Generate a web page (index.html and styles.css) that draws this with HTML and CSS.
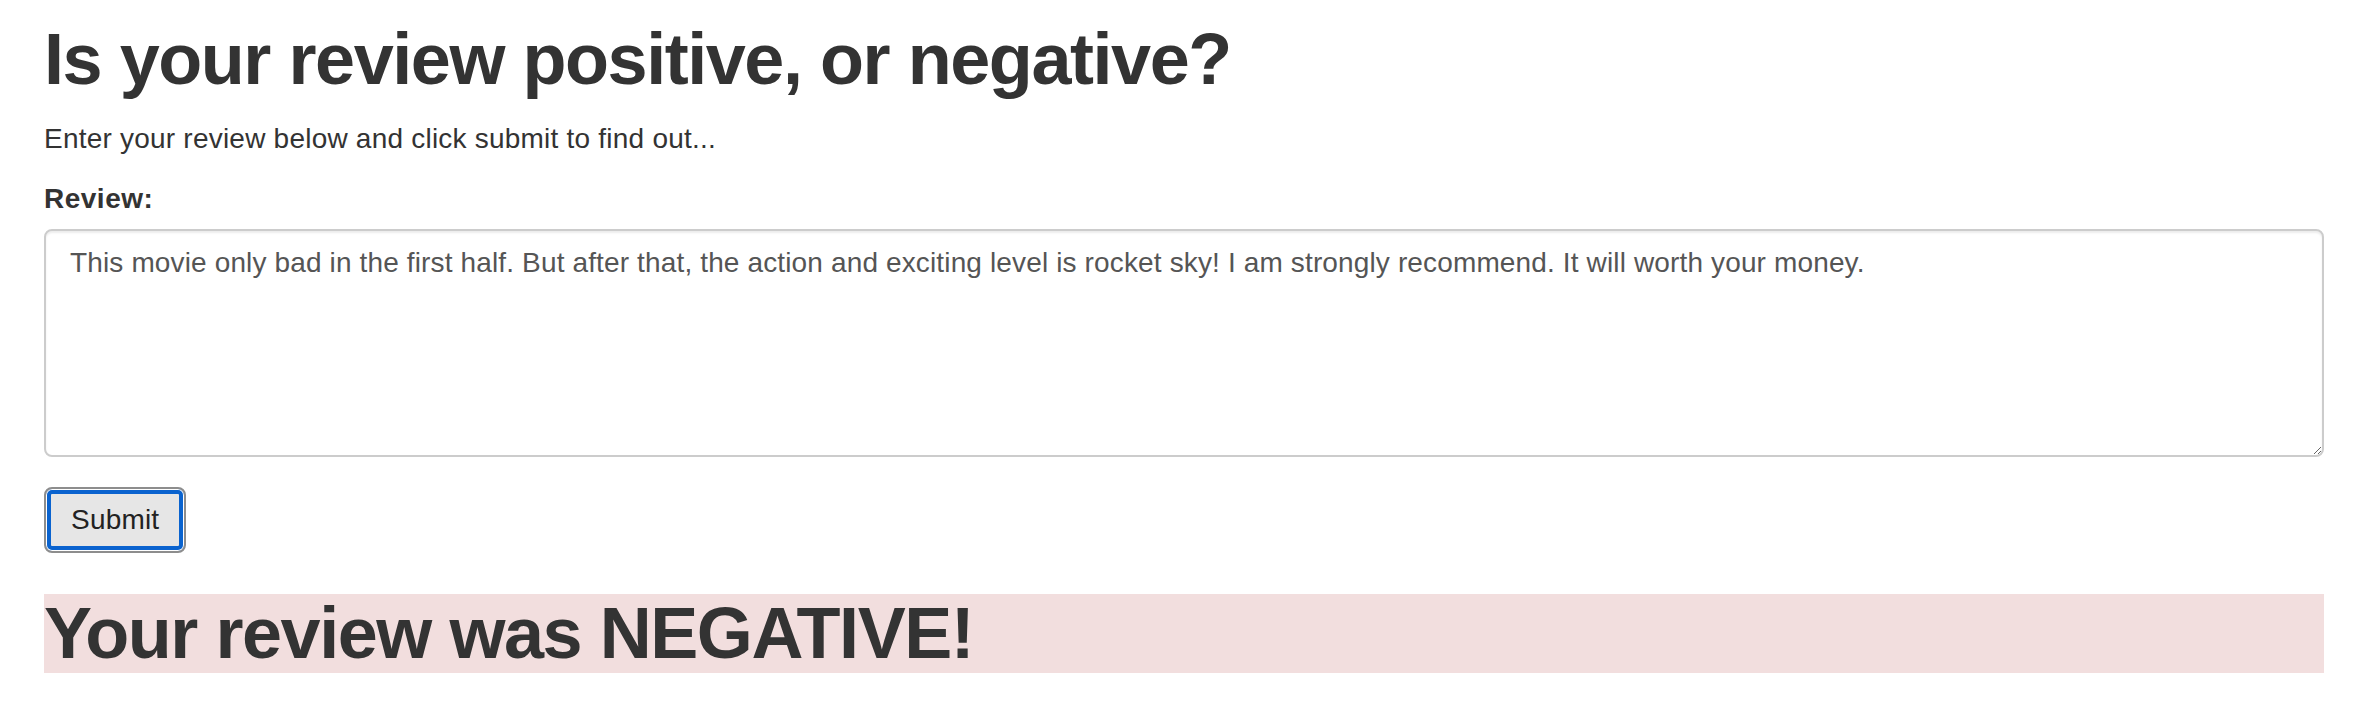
FILE: index.html
```html
<!DOCTYPE html>
<html lang="en">
<head>
<meta charset="utf-8">
<title>Sentiment</title>
<link rel="stylesheet" href="styles.css">
</head>
<body>
<div class="page">
  <h1 class="title">Is your review positive, or negative?</h1>
  <p class="lead-text">Enter your review below and click submit to find out...</p>
  <form class="review-form">
    <div class="form-group">
      <label class="field-label" for="review">Review:</label>
      <textarea id="review" class="form-control" rows="5">This movie only bad in the first half. But after that, the action and exciting level is rocket sky! I am strongly recommend. It will worth your money.</textarea>
    </div>
    <button type="button" class="submit-btn">Submit</button>
  </form>
  <h1 class="result negative">Your review was NEGATIVE!</h1>
</div>
</body>
</html>
```

FILE: styles.css
```css
html, body {
  margin: 0;
  padding: 0;
  background: #fff;
}

body {
  font-family: "Liberation Sans", Arial, Helvetica, sans-serif;
  font-size: 28px;
  line-height: 40px;
  color: #333;
  letter-spacing: 0.22px;
}

.page {
  padding: 20px 32px 0 44px;
}

.title,
.result {
  font-size: 72px;
  line-height: 79px;
  font-weight: bold;
  letter-spacing: -1.45px;
  margin: 0 0 20px 0;
  color: #333;
}

.lead-text {
  margin: 0 0 20px 0;
}

.review-form {
  margin: 0;
}

.form-group {
  display: flex;
  flex-direction: column;
  align-items: flex-start;
  margin-bottom: 30px;
}

.field-label {
  font-weight: bold;
  letter-spacing: 0.5px;
  margin-bottom: 10px;
}

.form-control {
  box-sizing: border-box;
  width: 100%;
  display: block;
  padding: 12px 24px;
  border: 2px solid #ccc;
  border-radius: 8px;
  box-shadow: inset 0 2px 2px rgba(0, 0, 0, 0.075);
  font-family: "Liberation Sans", Arial, Helvetica, sans-serif;
  font-size: 28px;
  line-height: 40px;
  letter-spacing: 0.14px;
  color: #555;
  background: #fff;
  margin: 0;
}

.submit-btn {
  display: block;
  box-sizing: border-box;
  height: 66px;
  padding: 11px 25px;
  border: 2px solid #8d8d8d;
  border-radius: 8px;
  background: #e6e6e6;
  box-shadow: inset 0 0 0 1px #fff, inset 0 0 0 5px #0a63cf;
  font-family: "Liberation Sans", Arial, Helvetica, sans-serif;
  font-size: 28px;
  line-height: 40px;
  letter-spacing: 0.2px;
  color: #222;
  margin: 0;
}

.result {
  margin-top: 41px;
}

.negative {
  background: #f2dede;
}
```
